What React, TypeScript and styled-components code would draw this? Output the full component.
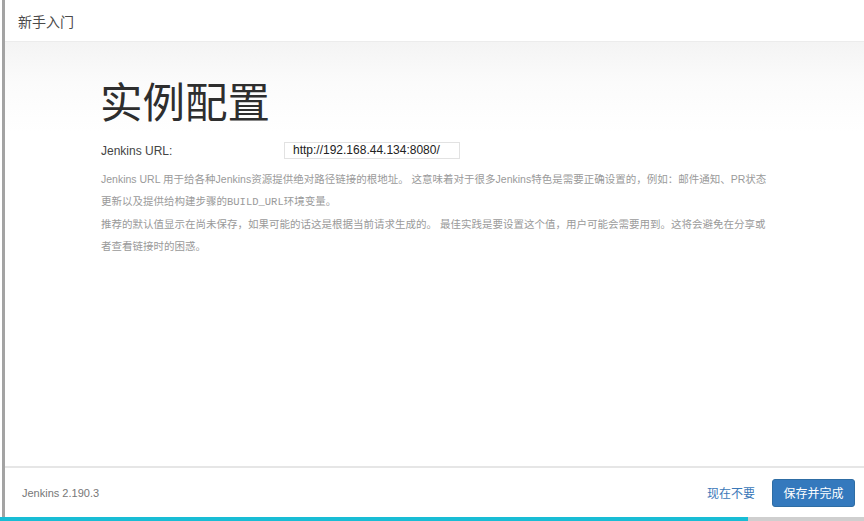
import React from 'react';
import styled, { createGlobalStyle } from 'styled-components';

const GlobalStyle = createGlobalStyle`
  html, body {
    margin: 0;
    padding: 0;
    background: #fff;
  }
  body {
    font-family: 'Liberation Sans', 'Noto Sans CJK SC', sans-serif;
  }
`;

const Frame = styled.div`
  width: 864px;
  height: 521px;
  display: flex;
  flex-direction: column;
  overflow: hidden;
  background: #fff;
`;

const Dialog = styled.div`
  flex: 1;
  display: flex;
  flex-direction: column;
  margin-left: 2px;
  border-left: 3px solid #a3a3a3;
`;

const Header = styled.div`
  height: 41px;
  display: flex;
  align-items: center;
  padding-left: 13px;
  border-bottom: 1px solid #ececec;
  font-family: 'Noto Sans CJK SC', sans-serif;
  font-size: 14px;
  color: #4a4a4a;
`;

const Body = styled.div`
  flex: 1;
  padding: 30px 0 0 95px;
  background: linear-gradient(#f4f4f4 0px, #fbfbfb 40px, #fff 90px);
`;

const Title = styled.h1`
  margin: 0 0 14px;
  font-family: 'Noto Sans CJK SC', sans-serif;
  font-weight: 400;
  font-size: 42.5px;
  line-height: 56px;
  color: #2e2e2e;
`;

const FieldRow = styled.div`
  display: flex;
  align-items: center;
  margin-bottom: 9px;
`;

const Label = styled.label`
  width: 183px;
  padding-left: 1px;
  font-size: 12px;
  color: #444;
`;

const UrlInput = styled.div`
  width: 166px;
  height: 15px;
  padding-left: 8px;
  border: 1px solid #e2e2e2;
  font-size: 12px;
  line-height: 15px;
  color: #222;
`;

const Help = styled.p`
  margin: 0;
  padding-left: 1px;
  font-family: 'Liberation Sans', 'Noto Sans CJK SC', sans-serif;
  font-size: 10.5px;
  line-height: 22px;
  color: #9a9a9a;
`;

const Mono = styled.span`
  font-family: 'Liberation Mono', monospace;
`;

const Footer = styled.div`
  height: 49px;
  display: flex;
  align-items: center;
  padding: 0 9px 0 17px;
  border-top: 2px solid #e6e6e6;
`;

const Version = styled.span`
  flex: 1;
  font-size: 11px;
  color: #777;
`;

const LinkButton = styled.a`
  margin-right: 17px;
  font-family: 'Noto Sans CJK SC', sans-serif;
  font-size: 12px;
  color: #3b78b8;
  text-decoration: none;
`;

const PrimaryButton = styled.button`
  width: 83px;
  height: 28px;
  border: 1px solid #2e6da4;
  border-radius: 3px;
  background: #3479bd;
  font-family: 'Noto Sans CJK SC', sans-serif;
  font-size: 12px;
  color: #fff;
`;

const Progress = styled.div`
  height: 4px;
  display: flex;
  background: #cfcfcf;
`;

const ProgressFill = styled.div`
  height: 100%;
  background: #18bdd5;
`;

export default function App() {
  const progress = 748;
  return (
    <>
      <GlobalStyle />
      <Frame>
        <Dialog>
          <Header>新手入门</Header>
          <Body>
            <Title>实例配置</Title>
            <FieldRow>
              <Label>Jenkins URL:</Label>
              <UrlInput>http://192.168.44.134:8080/</UrlInput>
            </FieldRow>
            <Help>
              Jenkins URL 用于给各种Jenkins资源提供绝对路径链接的根地址。 这意味着对于很多Jenkins特色是需要正确设置的，例如：邮件通知、PR状态
              <br />
              更新以及提供给构建步骤的<Mono>BUILD_URL</Mono>环境变量。
            </Help>
            <Help>
              推荐的默认值显示在尚未保存，如果可能的话这是根据当前请求生成的。 最佳实践是要设置这个值，用户可能会需要用到。这将会避免在分享或
              <br />
              者查看链接时的困惑。
            </Help>
          </Body>
          <Footer>
            <Version>Jenkins 2.190.3</Version>
            <LinkButton href="#">现在不要</LinkButton>
            <PrimaryButton>保存并完成</PrimaryButton>
          </Footer>
        </Dialog>
        <Progress>
          <ProgressFill style={{ width: progress }} />
        </Progress>
      </Frame>
    </>
  );
}
